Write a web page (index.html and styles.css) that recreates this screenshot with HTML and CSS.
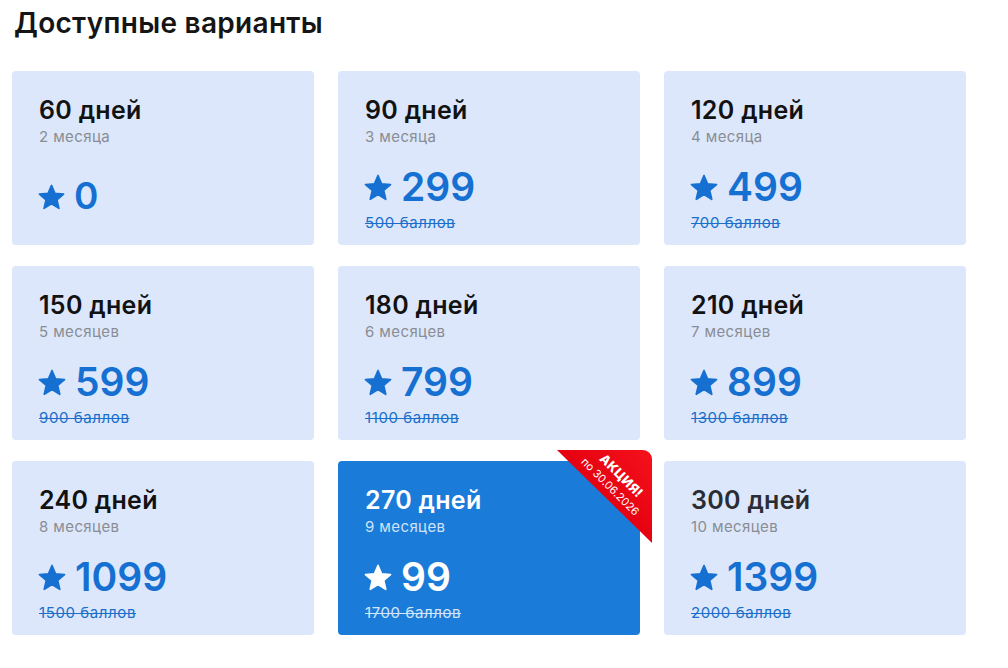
FILE: index.html
```html
<!DOCTYPE html>
<html lang="ru">
<head>
<meta charset="utf-8">
<title>Доступные варианты</title>
<link rel="stylesheet" href="styles.css">
</head>
<body>
<h1 class="heading">Доступные варианты</h1>
<div class="grid">
  <div class="card card--free">
    <div class="title">60 дней</div>
    <div class="sub">2 месяца</div>
    <div class="price"><svg class="star" viewBox="0 0 24 24"><path d="M12 17.27L18.18 21l-1.64-7.03L22 9.24l-7.19-.61L12 2 9.19 8.63 2 9.24l5.46 4.73L5.82 21z"/></svg><span>0</span></div>
  </div>
  <div class="card">
    <div class="title">90 дней</div>
    <div class="sub">3 месяца</div>
    <div class="price"><svg class="star" viewBox="0 0 24 24"><path d="M12 17.27L18.18 21l-1.64-7.03L22 9.24l-7.19-.61L12 2 9.19 8.63 2 9.24l5.46 4.73L5.82 21z"/></svg><span>299</span></div>
    <div class="old">500 баллов</div>
  </div>
  <div class="card">
    <div class="title">120 дней</div>
    <div class="sub">4 месяца</div>
    <div class="price"><svg class="star" viewBox="0 0 24 24"><path d="M12 17.27L18.18 21l-1.64-7.03L22 9.24l-7.19-.61L12 2 9.19 8.63 2 9.24l5.46 4.73L5.82 21z"/></svg><span>499</span></div>
    <div class="old">700 баллов</div>
  </div>
  <div class="card">
    <div class="title">150 дней</div>
    <div class="sub">5 месяцев</div>
    <div class="price"><svg class="star" viewBox="0 0 24 24"><path d="M12 17.27L18.18 21l-1.64-7.03L22 9.24l-7.19-.61L12 2 9.19 8.63 2 9.24l5.46 4.73L5.82 21z"/></svg><span>599</span></div>
    <div class="old">900 баллов</div>
  </div>
  <div class="card">
    <div class="title">180 дней</div>
    <div class="sub">6 месяцев</div>
    <div class="price"><svg class="star" viewBox="0 0 24 24"><path d="M12 17.27L18.18 21l-1.64-7.03L22 9.24l-7.19-.61L12 2 9.19 8.63 2 9.24l5.46 4.73L5.82 21z"/></svg><span>799</span></div>
    <div class="old">1100 баллов</div>
  </div>
  <div class="card">
    <div class="title">210 дней</div>
    <div class="sub">7 месяцев</div>
    <div class="price"><svg class="star" viewBox="0 0 24 24"><path d="M12 17.27L18.18 21l-1.64-7.03L22 9.24l-7.19-.61L12 2 9.19 8.63 2 9.24l5.46 4.73L5.82 21z"/></svg><span>899</span></div>
    <div class="old">1300 баллов</div>
  </div>
  <div class="card">
    <div class="title">240 дней</div>
    <div class="sub">8 месяцев</div>
    <div class="price"><svg class="star" viewBox="0 0 24 24"><path d="M12 17.27L18.18 21l-1.64-7.03L22 9.24l-7.19-.61L12 2 9.19 8.63 2 9.24l5.46 4.73L5.82 21z"/></svg><span>1099</span></div>
    <div class="old">1500 баллов</div>
  </div>
  <div class="card card--active">
    <div class="ribbon">
      <div class="ribbon-text">
        <div class="ribbon-main">АКЦИЯ!</div>
        <div class="ribbon-date">по 30.06.2026</div>
      </div>
    </div>
    <div class="title">270 дней</div>
    <div class="sub">9 месяцев</div>
    <div class="price"><svg class="star" viewBox="0 0 24 24"><path d="M12 17.27L18.18 21l-1.64-7.03L22 9.24l-7.19-.61L12 2 9.19 8.63 2 9.24l5.46 4.73L5.82 21z"/></svg><span>99</span></div>
    <div class="old">1700 баллов</div>
  </div>
  <div class="card">
    <div class="title title--soft">300 дней</div>
    <div class="sub">10 месяцев</div>
    <div class="price"><svg class="star" viewBox="0 0 24 24"><path d="M12 17.27L18.18 21l-1.64-7.03L22 9.24l-7.19-.61L12 2 9.19 8.63 2 9.24l5.46 4.73L5.82 21z"/></svg><span>1399</span></div>
    <div class="old">2000 баллов</div>
  </div>
</div>
</body>
</html>
```
FILE: styles.css
```css
* { box-sizing: border-box; }
html, body { background: #ffffff; }
body {
  margin: 0;
  padding: 7px 12px 0 12px;
  font-family: Inter, "Noto Sans", sans-serif;
}
.heading {
  margin: 0 0 32px 2px;
  font-size: 28px;
  line-height: 32px;
  font-weight: 600;
  color: #151515;
  letter-spacing: 0.3px;
}
.grid {
  display: grid;
  grid-template-columns: repeat(3, 302px);
  grid-auto-rows: 174px;
  column-gap: 24px;
  row-gap: 21px;
}
.card {
  position: relative;
  background: #dce7fb;
  border-radius: 4px;
  padding: 25px 26px 14px 27px;
  display: flex;
  flex-direction: column;
}
.title {
  font-size: 25px;
  line-height: 28px;
  font-weight: 600;
  color: #121212;
  letter-spacing: 0.3px;
}
.title--soft { color: #2a2d33; }
.sub {
  margin-top: 4px;
  font-size: 15px;
  line-height: 18px;
  color: #8a8d93;
  letter-spacing: 0.4px;
}
.price {
  margin-top: 19px;
  display: flex;
  align-items: center;
  font-size: 39px;
  line-height: 44px;
  font-weight: 600;
  color: #1670d2;
}
.star {
  width: 30px;
  height: 30px;
  margin: 2px 8px 0 -2px;
  fill: #1670d2;
  stroke: #1670d2;
  stroke-width: 1.4;
  stroke-linejoin: round;
  flex: none;
}
.old {
  margin-top: 5px;
  font-size: 15px;
  line-height: 17px;
  color: #1a6fcc;
  letter-spacing: 0.6px;
  text-decoration: line-through;
  text-decoration-thickness: 1px;
}
.card--free .price {
  margin-top: 28px;
  font-size: 37px;
}
.card--free .star {
  width: 29px;
  height: 29px;
}
.card--active {
  background: #1b7bd9;
}
.card--active .title { color: #ffffff; }
.card--active .sub { color: #cfe2f8; }
.card--active .price { color: #ffffff; }
.card--active .star { fill: #ffffff; stroke: #ffffff; }
.card--active .old { color: #d3e5f8; }
.ribbon {
  position: absolute;
  top: -11px;
  right: -12px;
  width: 95px;
  height: 93px;
  border-radius: 0 9px 0 0;
  background: linear-gradient(225deg, #f5121c 0%, #e4000f 55%, #c4000b 100%);
  clip-path: polygon(0 0, 100% 0, 100% 100%);
  overflow: hidden;
}
.ribbon-text {
  position: absolute;
  left: 7px;
  top: 15px;
  width: 104px;
  height: 32px;
  transform: rotate(45deg);
  text-align: center;
  color: #ffffff;
}
.ribbon-main {
  font-size: 13px;
  line-height: 16px;
  font-weight: 800;
  letter-spacing: 0.3px;
}
.ribbon-date {
  font-size: 11px;
  line-height: 16px;
  font-weight: 400;
}
```
